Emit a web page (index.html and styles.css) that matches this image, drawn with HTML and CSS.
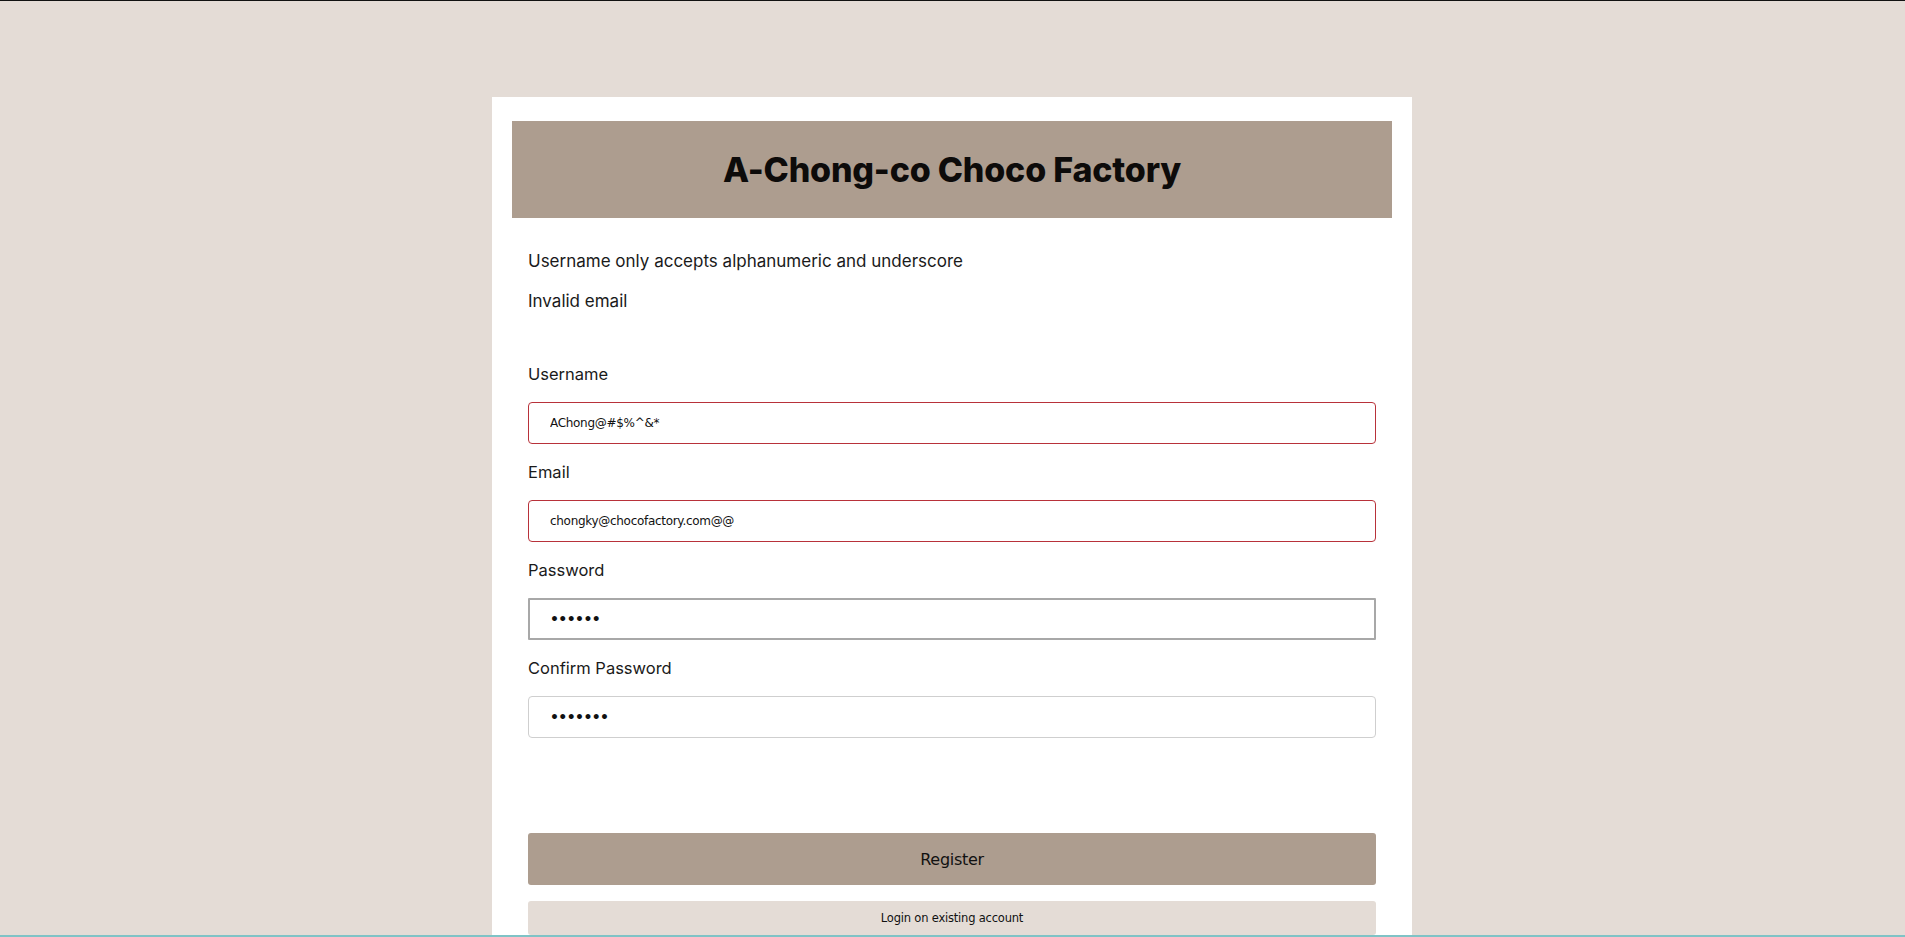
FILE: index.html
```html
<!DOCTYPE html>
<html lang="en">
<head>
<meta charset="utf-8">
<title>Register - A-Chong-co Choco Factory</title>
<link rel="stylesheet" href="styles.css">
</head>
<body>
<div class="page">
  <main class="card">
    <header class="banner">
      <h1 class="title">A-Chong-co Choco Factory</h1>
    </header>
    <form class="form">
      <div class="errors">
        <p class="error">Username only accepts alphanumeric and underscore</p>
        <p class="error">Invalid email</p>
      </div>
      <div class="fields">
        <label class="field">
          <span class="label">Username</span>
          <input class="input input-invalid" type="text" value="AChong@#$%^&amp;*">
        </label>
        <label class="field">
          <span class="label">Email</span>
          <input class="input input-invalid" type="text" value="chongky@chocofactory.com@@">
        </label>
        <label class="field">
          <span class="label">Password</span>
          <input class="input input-pass input-focus" type="password" value="123456">
        </label>
        <label class="field">
          <span class="label">Confirm Password</span>
          <input class="input input-pass" type="password" value="1234567">
        </label>
      </div>
      <div class="actions">
        <button class="btn btn-primary" type="button">Register</button>
        <button class="btn btn-secondary" type="button">Login on existing account</button>
      </div>
    </form>
  </main>
</div>
<div class="bottom-line"></div>
</body>
</html>
```
FILE: styles.css
```css
html, body {
  margin: 0;
  padding: 0;
}
body {
  background: #e4dcd6;
  font-family: "Inter", "Open Sans", sans-serif;
  color: #111;
}
.page {
  border-top: 1px solid #111;
  padding-top: 96px;
  padding-right: 1px;
  min-height: 100vh;
  box-sizing: border-box;
}
.card {
  width: 920px;
  margin: 0 auto;
  background: #ffffff;
  padding: 24px 20px 40px;
  box-sizing: border-box;
}
.banner {
  background: #ad9d8f;
  height: 97px;
  display: flex;
  align-items: center;
  justify-content: center;
}
.title {
  margin: 0;
  font-family: "Inter", sans-serif;
  font-weight: 800;
  font-size: 34px;
  letter-spacing: -0.2px;
  color: #0d0b0a;
}
.form {
  padding: 0 16px;
}
.errors {
  margin-top: 31px;
  display: flex;
  flex-direction: column;
  gap: 16px;
}
.error {
  margin: 0;
  font-size: 17px;
  line-height: 24px;
  color: #1a1a1a;
}
.fields {
  margin-top: 49px;
  display: flex;
  flex-direction: column;
  gap: 16px;
}
.field {
  display: flex;
  flex-direction: column;
  gap: 16px;
}
.label {
  font-size: 16.5px;
  line-height: 24px;
  color: #1a1a1a;
}
.input {
  height: 42px;
  box-sizing: border-box;
  border: 1px solid #cfcfcf;
  border-radius: 4px;
  padding: 0 21px;
  font-family: "DejaVu Sans", "Liberation Sans", sans-serif;
  font-size: 12px;
  letter-spacing: -0.3px;
  color: #111;
  background: #fff;
  outline: none;
}
.input-invalid {
  border-color: #b8323a;
}
.input-pass {
  font-size: 14px;
  font-weight: bold;
  letter-spacing: -0.6px;
}
.input-focus {
  border: 2px solid #a8a8a8;
  border-radius: 1px;
  padding-left: 20px;
}
.actions {
  margin-top: 95px;
  display: flex;
  flex-direction: column;
  gap: 16px;
}
.btn {
  border: none;
  border-radius: 3px;
  font-family: "DejaVu Sans", "Liberation Sans", sans-serif;
  color: #111;
  cursor: pointer;
}
.btn-primary {
  height: 52px;
  background: #ad9d8f;
  font-size: 16px;
  letter-spacing: -0.3px;
}
.btn-secondary {
  height: 34px;
  background: #e4dcd6;
  font-size: 11.5px;
  letter-spacing: -0.2px;
}
.bottom-line {
  position: fixed;
  left: 0;
  right: 0;
  bottom: 0;
  height: 2px;
  background: #7fc3c6;
}
```
